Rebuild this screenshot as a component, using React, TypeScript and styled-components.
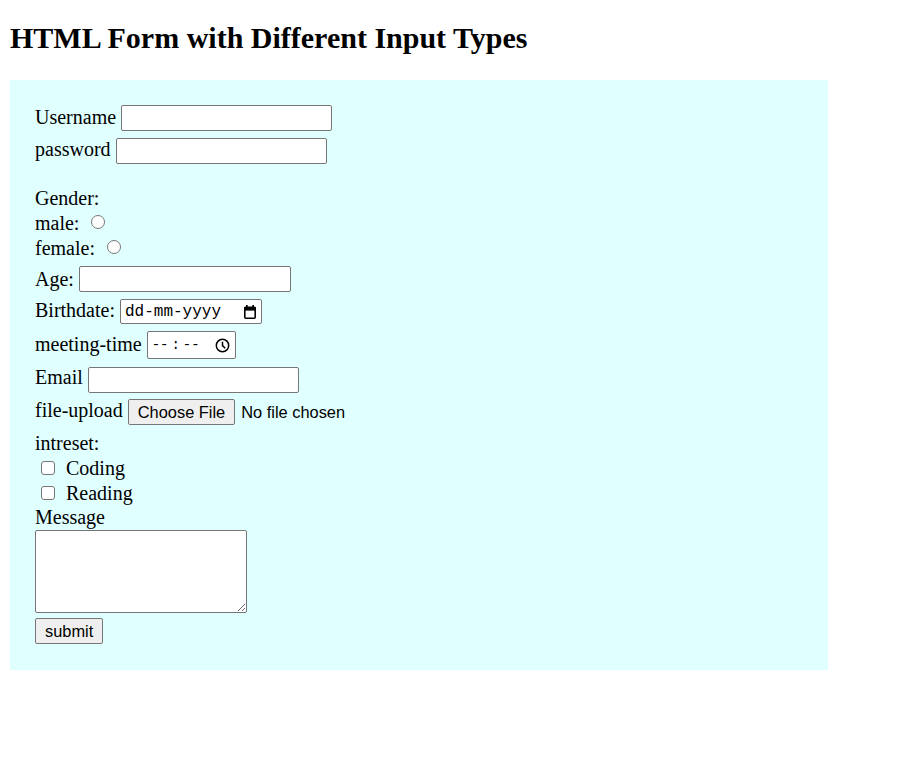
import React from "react";
import styled, { createGlobalStyle } from "styled-components";

const GlobalStyle = createGlobalStyle`
  body {
    margin: 0;
    background: #ffffff;
    color: #000000;
  }
`;

const Page = styled.div`
  padding: 0 10px;
  font-family: "Liberation Serif", "Times New Roman", serif;
`;

const Title = styled.h1`
  font-size: 30px;
  font-weight: bold;
  line-height: normal;
  margin: 21px 0 25px;
`;

const FormBox = styled.form`
  width: 818px;
  box-sizing: border-box;
  padding: 25px 25px 26px;
  background: #e0ffff;
  display: flex;
  flex-direction: column;
  align-items: flex-start;
  font-size: 20px;
`;

const Row = styled.div<{ $top?: number; $h: number }>`
  display: flex;
  align-items: center;
  gap: 5px;
  height: ${(p) => p.$h}px;
  line-height: ${(p) => p.$h}px;
  margin-top: ${(p) => p.$top ?? 0}px;
  white-space: nowrap;
`;

// label beside a field sits a little above the row centre, as on the baseline
const FieldLabel = styled.span<{ $raise?: number }>`
  padding-bottom: ${(p) => (p.$raise ?? 0) * 2}px;
`;

const TextInput = styled.input<{ $w?: number }>`
  width: ${(p) => p.$w ?? 211}px;
  height: 26px;
  box-sizing: border-box;
  border: 1px solid #767676;
  border-radius: 2px;
  background: #ffffff;
  padding: 1px 3px;
  font-family: "Liberation Sans", Arial, sans-serif;
  font-size: 16px;
  outline: none;
`;

const Radio = styled.input`
  appearance: none;
  width: 14px;
  height: 14px;
  margin: 0 0 4px 7px;
  box-sizing: border-box;
  border: 1px solid #767676;
  border-radius: 50%;
  background: #ffffff;
`;

const Checkbox = styled.input`
  appearance: none;
  width: 14px;
  height: 14px;
  margin: 0 6px 2px 6px;
  box-sizing: border-box;
  border: 1px solid #767676;
  border-radius: 3px;
  background: #ffffff;
`;

const PickerField = styled.div<{ $w: number; $h: number; $pr: number }>`
  display: flex;
  align-items: center;
  justify-content: space-between;
  width: ${(p) => p.$w}px;
  height: ${(p) => p.$h}px;
  box-sizing: border-box;
  border: 1px solid #767676;
  border-radius: 2px;
  background: #ffffff;
  padding: 0 ${(p) => p.$pr}px 0 4px;
  font-family: "Liberation Mono", "Courier New", monospace;
  font-size: 16px;
  line-height: normal;
  color: #000000;
`;

const TimeText = styled.span`
  display: flex;
  font-size: 14px;
`;

const Colon = styled.span`
  margin: 0 3px;
`;

const NativeButton = styled.button`
  height: 26px;
  box-sizing: border-box;
  padding: 0 9px;
  border: 1px solid #767676;
  border-radius: 2px;
  background: #efefef;
  color: #000000;
  font-family: "Liberation Sans", Arial, sans-serif;
  font-size: 16.4px;
  line-height: normal;
`;

const FileName = styled.span`
  margin-left: 1px;
  font-family: "Liberation Sans", Arial, sans-serif;
  font-size: 16.4px;
`;

const MessageBox = styled.textarea`
  width: 212px;
  height: 83px;
  margin-top: 1px;
  box-sizing: border-box;
  border: 1px solid #767676;
  border-radius: 2px;
  background: #ffffff;
  font-family: "Liberation Mono", monospace;
  font-size: 16px;
  outline: none;
`;

const SubmitRow = styled.div`
  margin-top: 5px;
`;

const CalendarIcon = () => (
  <svg width="14" height="14" viewBox="0 0 14 14">
    <rect x="3" y="0" width="1.7" height="3" fill="#000" />
    <rect x="9.3" y="0" width="1.7" height="3" fill="#000" />
    <rect x="1.8" y="2.3" width="10.4" height="10.9" rx="1" fill="none" stroke="#000" strokeWidth="1.6" />
    <rect x="1" y="2" width="12" height="3.6" fill="#000" />
  </svg>
);

const ClockIcon = () => (
  <svg width="15" height="15" viewBox="0 0 15 15">
    <circle cx="7.5" cy="7.5" r="6.2" fill="none" stroke="#000" strokeWidth="1.5" />
    <path d="M7.5 3.8 V7.6 L10.2 10.2" fill="none" stroke="#000" strokeWidth="1.5" />
  </svg>
);

export default function App() {
  return (
    <Page>
      <GlobalStyle />
      <Title>HTML Form with Different Input Types</Title>
      <FormBox onSubmit={(e) => e.preventDefault()}>
        <Row $h={26}>
          <FieldLabel $raise={1}>Username</FieldLabel>
          <TextInput type="text" />
        </Row>
        <Row $h={26} $top={7}>
          <FieldLabel $raise={2}>password</FieldLabel>
          <TextInput type="password" />
        </Row>
        <Row $h={25} $top={22}>
          <span>Gender:</span>
        </Row>
        <Row $h={25}>
          <span>male:</span>
          <Radio type="radio" name="gender" />
        </Row>
        <Row $h={25}>
          <span>female:</span>
          <Radio type="radio" name="gender" />
        </Row>
        <Row $h={26} $top={5}>
          <FieldLabel>Age:</FieldLabel>
          <TextInput type="number" $w={212} />
        </Row>
        <Row $h={25} $top={7}>
          <FieldLabel $raise={1}>Birthdate:</FieldLabel>
          <PickerField $w={142} $h={25} $pr={4}>
            <span>dd-mm-yyyy</span>
            <CalendarIcon />
          </PickerField>
        </Row>
        <Row $h={28} $top={7}>
          <FieldLabel $raise={1}>meeting-time</FieldLabel>
          <PickerField $w={89} $h={28} $pr={5}>
            <TimeText>
              <span>--</span>
              <Colon>:</Colon>
              <span>--</span>
            </TimeText>
            <ClockIcon />
          </PickerField>
        </Row>
        <Row $h={26} $top={8}>
          <FieldLabel $raise={3}>Email</FieldLabel>
          <TextInput type="email" />
        </Row>
        <Row $h={26} $top={6}>
          <FieldLabel $raise={2}>file-upload</FieldLabel>
          <NativeButton type="button">Choose File</NativeButton>
          <FileName>No file chosen</FileName>
        </Row>
        <Row $h={25} $top={6}>
          <span>intreset:</span>
        </Row>
        <Row $h={25}>
          <Checkbox type="checkbox" />
          <span>Coding</span>
        </Row>
        <Row $h={25}>
          <Checkbox type="checkbox" />
          <span>Reading</span>
        </Row>
        <Row $h={23}>
          <span>Message</span>
        </Row>
        <MessageBox />
        <SubmitRow>
          <NativeButton type="submit">submit</NativeButton>
        </SubmitRow>
      </FormBox>
    </Page>
  );
}
